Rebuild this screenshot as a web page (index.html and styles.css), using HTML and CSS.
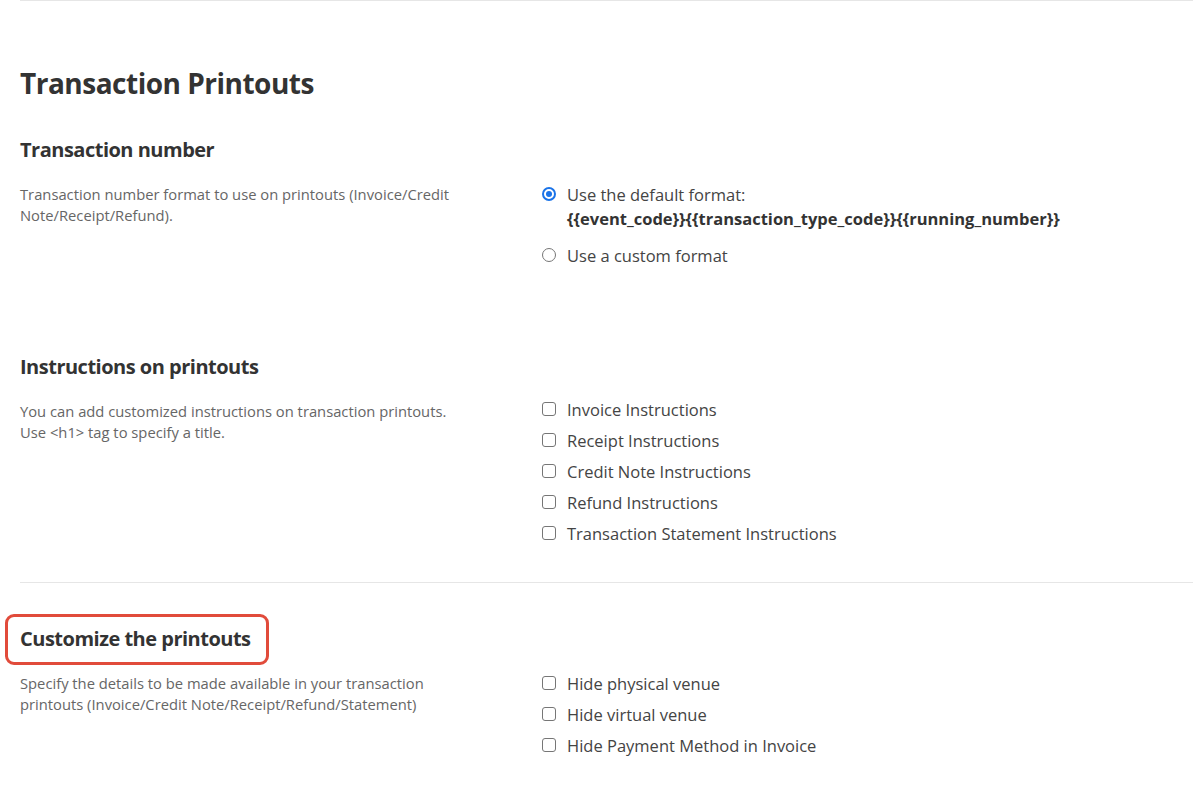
FILE: index.html
```html
<!DOCTYPE html>
<html>
<head>
<meta charset="utf-8">
<link rel="stylesheet" href="styles.css">
</head>
<body>
<div class="page">
  <div class="rule top"></div>
  <h1 class="title">Transaction Printouts</h1>

  <section class="block block-number">
    <h2 class="heading">Transaction number</h2>
    <div class="row">
      <p class="desc">Transaction number format to use on printouts (Invoice/Credit Note/Receipt/Refund).</p>
      <div class="options radios">
        <label class="opt">
          <span class="radio checked"></span>
          <span class="opt-text">Use the default format:<span class="code">{{event_code}}{{transaction_type_code}}{{running_number}}</span></span>
        </label>
        <label class="opt">
          <span class="radio"></span>
          <span class="opt-text">Use a custom format</span>
        </label>
      </div>
    </div>
  </section>

  <section class="block block-instr">
    <h2 class="heading">Instructions on printouts</h2>
    <div class="row">
      <p class="desc">You can add customized instructions on transaction printouts.<br>Use &lt;h1&gt; tag to specify a title.</p>
      <div class="options checks">
        <label class="opt"><span class="check"></span><span class="opt-text">Invoice Instructions</span></label>
        <label class="opt"><span class="check"></span><span class="opt-text">Receipt Instructions</span></label>
        <label class="opt"><span class="check"></span><span class="opt-text">Credit Note Instructions</span></label>
        <label class="opt"><span class="check"></span><span class="opt-text">Refund Instructions</span></label>
        <label class="opt"><span class="check"></span><span class="opt-text">Transaction Statement Instructions</span></label>
      </div>
    </div>
  </section>

  <div class="rule mid"></div>

  <section class="block block-custom">
    <h2 class="heading highlight">Customize the printouts</h2>
    <div class="row">
      <p class="desc">Specify the details to be made available in your transaction printouts (Invoice/Credit Note/Receipt/Refund/Statement)</p>
      <div class="options checks">
        <label class="opt"><span class="check"></span><span class="opt-text">Hide physical venue</span></label>
        <label class="opt"><span class="check"></span><span class="opt-text">Hide virtual venue</span></label>
        <label class="opt"><span class="check"></span><span class="opt-text">Hide Payment Method in Invoice</span></label>
      </div>
    </div>
  </section>
</div>
</body>
</html>
```
FILE: styles.css
```css
* { box-sizing: border-box; }
html, body { margin: 0; padding: 0; background: #fff; }
body {
  font-family: "Open Sans", "Noto Sans", sans-serif;
  color: #333;
}
.page {
  padding-left: 20px;
}
.rule {
  height: 0;
  border-top: 1px solid #e6e6e6;
}
.title {
  margin: 63px 0 0;
  font-size: 28px;
  line-height: 38px;
  font-weight: 700;
  letter-spacing: -0.5px;
  color: #333;
}
.heading {
  margin: 0;
  font-size: 20px;
  line-height: 28px;
  font-weight: 700;
  letter-spacing: -0.5px;
  color: #333;
}
.block-number { margin-top: 34px; }
.block-instr { margin-top: 87px; }
.rule.mid { margin-top: 38px; }
.block-custom { margin-top: 42px; }

.row {
  display: grid;
  grid-template-columns: 522px 1fr;
  margin-top: 20px;
}
.desc {
  margin: 0;
  max-width: 450px;
  font-size: 14.75px;
  line-height: 21px;
  color: #666;
}
.options {
  display: flex;
  flex-direction: column;
}
.radios { gap: 16px; }
.checks { gap: 10px; }
.block-instr .checks { margin-top: -2px; }
.opt {
  display: flex;
  align-items: flex-start;
  gap: 11px;
  font-size: 16.5px;
  line-height: 21px;
  color: #444;
}
.opt-text { display: block; }
.code {
  display: block;
  margin-top: 3px;
  font-weight: 700;
  color: #333;
}
.radio {
  flex: none;
  width: 14px;
  height: 14px;
  margin-top: 3px;
  border: 1px solid #767676;
  border-radius: 50%;
  background: #fff;
  position: relative;
}
.radio.checked {
  border: 2px solid #1a73e8;
}
.radio.checked::after {
  content: "";
  position: absolute;
  left: 2px;
  top: 2px;
  width: 6px;
  height: 6px;
  border-radius: 50%;
  background: #1a73e8;
}
.check {
  flex: none;
  width: 14px;
  height: 14px;
  margin-top: 3px;
  border: 1px solid #767676;
  border-radius: 3px;
  background: #fff;
}
.highlight {
  display: inline-block;
  position: relative;
}
.highlight::after {
  content: "";
  position: absolute;
  left: -15px;
  right: -18px;
  top: -11px;
  bottom: -12px;
  border: 3px solid #e14b3b;
  border-radius: 9px;
}
```
